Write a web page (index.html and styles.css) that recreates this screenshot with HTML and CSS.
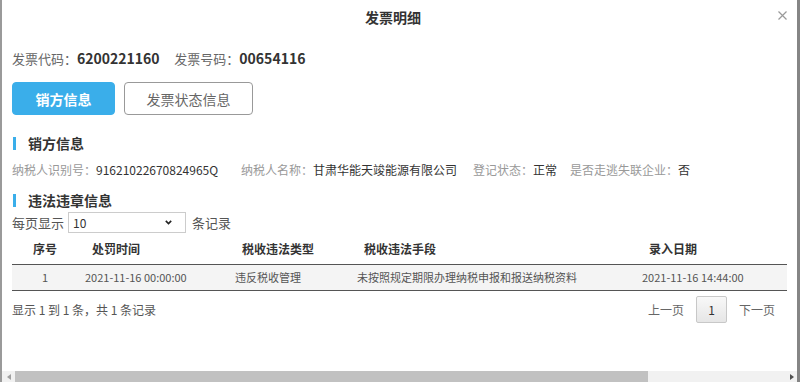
FILE: index.html
```html
<!DOCTYPE html>
<html lang="zh-CN">
<head>
<meta charset="utf-8">
<title>发票明细</title>
<link rel="stylesheet" href="styles.css">
</head>
<body>
<div class="dialog">
  <div class="titlebar">
    <div class="title">发票明细</div>
    <button class="close" type="button" aria-label="关闭">
      <svg width="9" height="9" viewBox="0 0 9 9"><path d="M0.5 0.5L8.5 8.5M8.5 0.5L0.5 8.5" stroke="#9a9a9a" stroke-width="1.2" fill="none"/></svg>
    </button>
  </div>
  <div class="content">
    <div class="codes">
      <span class="code-label">发票代码：</span><span class="code-value">6200221160</span>
      <span class="code-label code-label-next">发票号码：</span><span class="code-value">00654116</span>
    </div>
    <div class="tabs">
      <button class="tab tab-active" type="button">销方信息</button>
      <button class="tab" type="button">发票状态信息</button>
    </div>
    <h3 class="section-title">销方信息</h3>
    <div class="info-grid">
      <div class="info-item"><span class="info-label">纳税人识别号：</span><span class="info-value">91621022670824965Q</span></div>
      <div class="info-item"><span class="info-label">纳税人名称：</span><span class="info-value">甘肃华能天竣能源有限公司</span></div>
      <div class="info-item"><span class="info-label">登记状态：</span><span class="info-value">正常</span></div>
      <div class="info-item"><span class="info-label">是否走逃失联企业：</span><span class="info-value">否</span></div>
    </div>
    <h3 class="section-title">违法违章信息</h3>
    <div class="page-size">
      <span>每页显示</span>
      <div class="select"><span>10</span><svg width="7" height="5" viewBox="0 0 7 5"><path d="M0.8 0.9L3.5 3.6L6.2 0.9" stroke="#222" stroke-width="1.6" fill="none"/></svg></div>
      <span>条记录</span>
    </div>
    <table class="grid">
      <colgroup>
        <col class="c1"><col class="c2"><col class="c3"><col class="c4"><col class="c5">
      </colgroup>
      <thead>
        <tr><th class="center">序号</th><th>处罚时间</th><th>税收违法类型</th><th>税收违法手段</th><th>录入日期</th></tr>
      </thead>
      <tbody>
        <tr><td class="center">1</td><td>2021-11-16 00:00:00</td><td>违反税收管理</td><td>未按照规定期限办理纳税申报和报送纳税资料</td><td>2021-11-16 14:44:00</td></tr>
      </tbody>
    </table>
    <div class="table-footer">
      <span class="summary">显示 1 到 1 条，共 1 条记录</span>
      <div class="pager">
        <span class="pager-link">上一页</span>
        <span class="pager-current">1</span>
        <span class="pager-link">下一页</span>
      </div>
    </div>
  </div>
  <div class="hscroll">
    <div class="hs-btn hs-left"><svg width="4" height="6" viewBox="0 0 4 6"><path d="M4 0L0 3L4 6Z" fill="#a0a0a0"/></svg></div>
    <div class="hs-thumb"></div>
    <div class="hs-track"></div>
    <div class="hs-btn hs-right"><svg width="4" height="6" viewBox="0 0 4 6"><path d="M0 0L4 3L0 6Z" fill="#505050"/></svg></div>
  </div>
</div>
</body>
</html>
```
FILE: styles.css
```css
* { box-sizing: border-box; }
html, body { margin: 0; padding: 0; background: #fff; }
body {
  font-family: "Noto Sans CJK SC", "Microsoft YaHei", sans-serif;
  color: #333;
  font-size: 12px;
}
.dialog {
  width: 800px;
  height: 382px;
  display: flex;
  flex-direction: column;
  border-left: 2px solid #9a9a9a;
  border-right: 3px solid #858585;
  overflow: hidden;
}
.titlebar {
  height: 32px;
  display: flex;
  align-items: center;
  padding-left: 6px;
}
.title {
  flex: 1;
  text-align: center;
  font-size: 14px;
  font-weight: bold;
  color: #333;
  line-height: 20px;
  padding-top: 1px;
}
.close {
  border: 0;
  background: none;
  padding: 0;
  width: 9px;
  height: 9px;
  margin-right: 10px;
  margin-bottom: 2px;
  display: flex;
}
.content {
  flex: 1;
  padding: 0 10px;
}
.codes {
  margin-top: 16px;
  line-height: 20px;
  height: 20px;
  white-space: nowrap;
}
.code-label { font-size: 13px; color: #666; }
.code-label-next { margin-left: 12px; }
.code-value { font-size: 14px; font-weight: bold; color: #333; }
.tabs {
  margin-top: 14px;
  display: flex;
  gap: 9px;
}
.tab {
  height: 33px;
  border-radius: 4px;
  font-family: inherit;
  font-size: 14px;
  padding: 0;
  border: 1px solid #999;
  background: #fff;
  color: #666;
  width: 129px;
}
.tab-active {
  width: 103px;
  background: #3aaeea;
  border-color: #3aaeea;
  color: #fff;
  font-weight: bold;
}
.section-title {
  margin: 18px 0 0;
  height: 20px;
  line-height: 20px;
  font-size: 14px;
  font-weight: bold;
  color: #333;
  display: flex;
  align-items: center;
}
.section-title::before {
  content: "";
  width: 3px;
  height: 13px;
  background: #3aaeea;
  margin-left: 1px;
  margin-right: 12px;
}
.section-title + .page-size { margin-top: 2px; }
.info-grid + .section-title { margin-top: 10px; }
.info-grid {
  margin-top: 7px;
  display: grid;
  grid-template-columns: 229px 232px 97px auto;
  line-height: 20px;
  white-space: nowrap;
}
.info-label { color: #999; font-size: 12px; }
.info-value { color: #333; font-size: 12px; }
.page-size {
  height: 21px;
  display: flex;
  align-items: center;
  font-size: 13px;
  color: #555;
}
.select {
  width: 118px;
  height: 21px;
  margin: 0 6px 0 4px;
  border: 1px solid #ccc;
  display: flex;
  align-items: center;
  justify-content: space-between;
  padding: 0 13px 0 4px;
  font-size: 12px;
  color: #333;
}
.grid {
  width: 775px;
  border-collapse: collapse;
  table-layout: fixed;
}
.c1 { width: 66px; }
.c2 { width: 150px; }
.c3 { width: 122px; }
.c4 { width: 285px; }
.c5 { width: 152px; }
.grid th {
  text-align: left;
  font-size: 12px;
  font-weight: bold;
  color: #333;
  line-height: 20px;
  padding: 6px 0 5px 14px;
  border-bottom: 1px solid #555;
}
.grid td {
  text-align: left;
  font-size: 11px;
  color: #555;
  height: 26px;
  line-height: 25px;
  padding: 0 0 0 7px;
  background: #f4f4f4;
  border-bottom: 1px solid #555;
}
.grid .center { text-align: center; padding-left: 0; }
.table-footer {
  margin-top: 5px;
  height: 27px;
  display: flex;
  align-items: center;
  justify-content: space-between;
  font-size: 12px;
  color: #555;
}
.pager {
  display: flex;
  align-items: center;
}
.pager-link {
  padding: 0 12px;
  color: #666;
}
.pager-current {
  width: 31px;
  height: 27px;
  line-height: 25px;
  text-align: center;
  border: 1px solid #c8c8c8;
  border-radius: 2px;
  background: linear-gradient(#f8f8f8, #e6e6e6);
  color: #333;
}
.hscroll {
  height: 11px;
  display: flex;
  background: #f1f1f1;
}
.hs-btn {
  display: flex;
  align-items: center;
  justify-content: center;
  background: #f1f1f1;
}
.hs-left { width: 13px; }
.hs-right { width: 10px; }
.hs-thumb { width: 633px; background: #c1c1c1; }
.hs-track { flex: 1; background: #f1f1f1; }
```
